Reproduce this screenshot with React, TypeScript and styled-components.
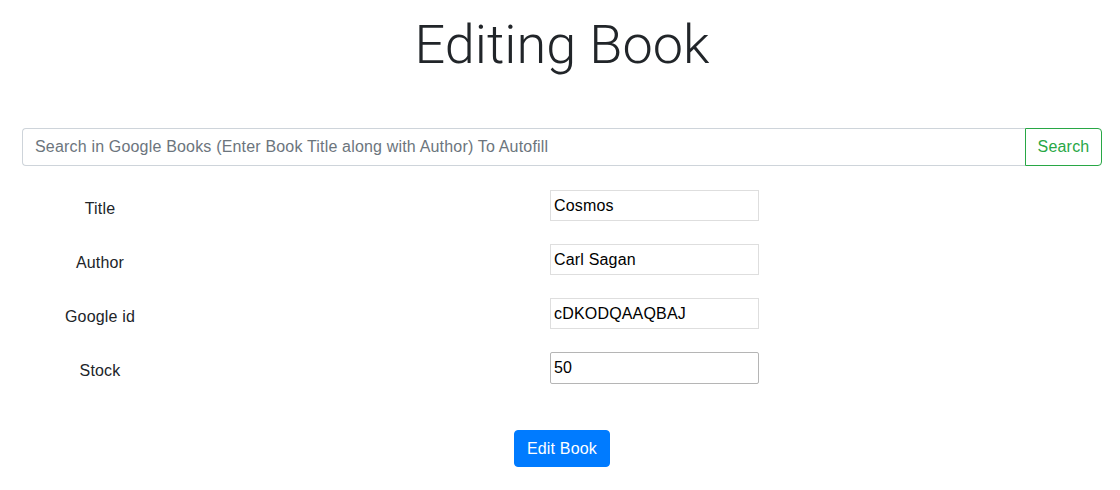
import React from "react";
import styled, { createGlobalStyle } from "styled-components";

const Global = createGlobalStyle`
  html, body { margin: 0; padding: 0; background: #fff; }
  body { font-family: "Liberation Sans", Arial, sans-serif; color: #212529; font-size: 16px; letter-spacing: 0.18px; }
  * { box-sizing: border-box; }
`;

const Page = styled.div`
  padding: 0 18px 0 22px;
`;

const Heading = styled.h1`
  margin: 0;
  padding-top: 12px;
  text-align: center;
  font-family: Roboto, "Liberation Sans", Arial, sans-serif;
  font-weight: 300;
  font-size: 54px;
  line-height: 66px;
  letter-spacing: 0;
  color: #212529;
`;

const SearchGroup = styled.div`
  display: flex;
  margin-top: 50px;
  height: 38px;
`;

const SearchInput = styled.input`
  flex: 1;
  min-width: 0;
  height: 38px;
  border: 1px solid #ced4da;
  border-right: none;
  border-radius: 4px 0 0 4px;
  padding: 0 12px;
  font-family: inherit;
  font-size: 16px;
  letter-spacing: 0.18px;
  color: #495057;
  outline: none;
  &::placeholder { color: #6c757d; }
`;

const SearchButton = styled.button`
  height: 38px;
  width: 77px;
  border: 1px solid #28a745;
  border-radius: 0 4px 4px 0;
  background: #fff;
  color: #28a745;
  font-family: inherit;
  font-size: 16px;
  letter-spacing: 0.18px;
  padding: 0;
  cursor: pointer;
`;

const Form = styled.div`
  display: grid;
  grid-template-columns: 156px 372px 209px;
  row-gap: 23px;
  margin-top: 24px;
  align-items: start;
`;

const Label = styled.label`
  display: block;
  height: 31px;
  text-align: center;
  font-size: 16px;
  line-height: 24px;
  padding-top: 7px;
`;

const Spacer = styled.div``;

const Field = styled.input<{ $number?: boolean }>`
  width: 209px;
  height: ${(p) => (p.$number ? "32px" : "31px")};
  border: 1px solid ${(p) => (p.$number ? "#b5b5b5" : "#dedede")};
  border-radius: ${(p) => (p.$number ? "2px" : "0")};
  padding: 0 4px 0 3px;
  font-family: inherit;
  font-size: 16px;
  letter-spacing: 0.18px;
  color: #000;
  background: #fff;
  outline: none;
`;

const Footer = styled.div`
  display: flex;
  justify-content: center;
  margin-top: 46px;
`;

const PrimaryButton = styled.button`
  width: 96px;
  height: 37px;
  border: 1px solid #007bff;
  border-radius: 4px;
  background: #007bff;
  color: #fff;
  font-family: inherit;
  font-size: 16px;
  letter-spacing: 0.18px;
  padding: 0;
  cursor: pointer;
`;

const rows = [
  { label: "Title", value: "Cosmos" },
  { label: "Author", value: "Carl Sagan" },
  { label: "Google id", value: "cDKODQAAQBAJ" },
];

export default function App() {
  return (
    <>
      <Global />
      <Page>
        <Heading>Editing Book</Heading>
        <SearchGroup>
          <SearchInput placeholder="Search in Google Books (Enter Book Title along with Author) To Autofill" />
          <SearchButton>Search</SearchButton>
        </SearchGroup>
        <Form>
          {rows.map((r) => (
            <React.Fragment key={r.label}>
              <Label>{r.label}</Label>
              <Spacer />
              <Field defaultValue={r.value} />
            </React.Fragment>
          ))}
          <Label>Stock</Label>
          <Spacer />
          <Field $number type="number" defaultValue={50} />
        </Form>
        <Footer>
          <PrimaryButton>Edit Book</PrimaryButton>
        </Footer>
      </Page>
    </>
  );
}
